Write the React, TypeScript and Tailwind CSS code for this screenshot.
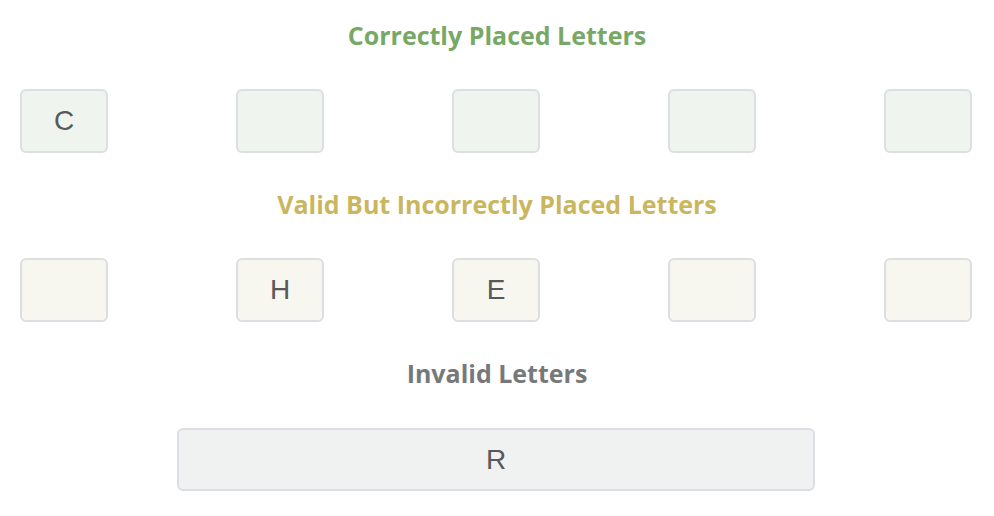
const correct = ['C', '', '', '', ''];
const misplaced = ['', 'H', 'E', '', ''];
const invalid = ['R'];

function Title({ text, color }: { text: string; color: string }) {
  return (
    <h2 className={`text-center text-[25px] leading-8 font-bold ${color}`} style={{ fontFamily: '"Open Sans", Lato, sans-serif' }}>
      {text}
    </h2>
  );
}

function Tile({ letter, bg }: { letter: string; bg: string }) {
  return (
    <div
      className={`flex h-16 w-[88px] items-center justify-center rounded-md border-2 border-[#dcdee3] text-[28px] text-[#58595b] ${bg}`}
      style={{ fontFamily: '"Liberation Sans", Arial, sans-serif' }}
    >
      {letter}
    </div>
  );
}

export default function App() {
  return (
    <div className="min-h-screen bg-white pt-[19px] pb-6">
      <Title text="Correctly Placed Letters" color="text-[#78a866]" />
      <div className="mt-[38px] flex justify-center gap-[128px] pr-[2px]">
        {correct.map((l, i) => (
          <Tile key={i} letter={l} bg="bg-[#f0f4ef]" />
        ))}
      </div>

      <div className="mt-[35px]">
        <Title text="Valid But Incorrectly Placed Letters" color="text-[#c9b65e]" />
      </div>
      <div className="mt-[38px] flex justify-center gap-[128px] pr-[2px]">
        {misplaced.map((l, i) => (
          <Tile key={i} letter={l} bg="bg-[#f7f7ef]" />
        ))}
      </div>

      <div className="mt-[35px]">
        <Title text="Invalid Letters" color="text-[#77787a]" />
      </div>
      <div className="mt-[39px] flex justify-center pr-[2px]">
        <div
          className="flex h-[63px] w-[638px] items-center justify-center gap-4 rounded-md border-2 border-[#dcdee3] bg-[#f0f1f1] text-[28px] text-[#58595b]"
          style={{ fontFamily: '"Liberation Sans", Arial, sans-serif' }}
        >
          {invalid.map((l) => (
            <span key={l}>{l}</span>
          ))}
        </div>
      </div>
    </div>
  );
}
